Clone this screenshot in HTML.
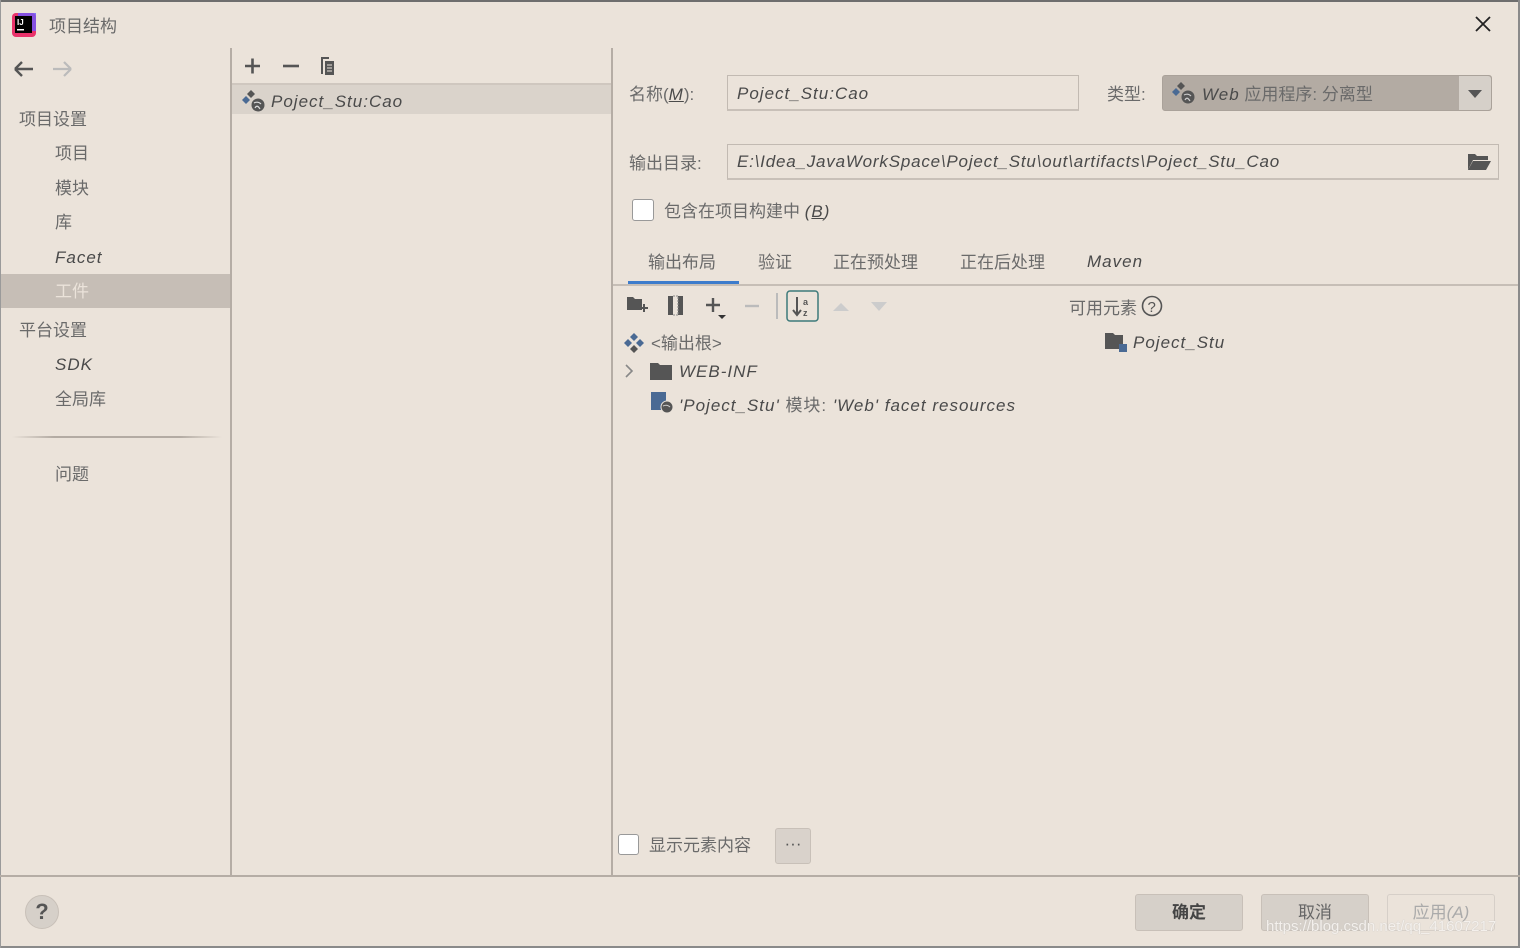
<!DOCTYPE html>
<html><head><meta charset="utf-8"><style>
*{margin:0;padding:0;box-sizing:border-box}
body{width:1520px;height:948px;background:#ebe3da;position:relative;overflow:hidden;font-family:"Liberation Sans","Noto Sans CJK SC",sans-serif;color:#5a5a5a;font-size:17px}
.a{position:absolute;white-space:nowrap}
.i{font-style:italic;color:#4a4a4a;letter-spacing:1px}
.cn{color:#6a6a6a}
</style></head><body>
<div class="a" style="left:0;top:0;width:1520px;height:2px;background:#6e6e6e"></div>
<div class="a" style="right:0;top:0;width:2px;height:948px;background:#8a8a8a"></div>
<div class="a" style="left:0;top:946px;width:1520px;height:2px;background:#8a8a8a"></div>
<div class="a" style="left:0;top:0;width:1px;height:948px;background:#9a9a9a"></div>
<svg class="a" style="left:12px;top:13px" width="24" height="24"><rect x="0" y="0" width="24" height="24" rx="4" fill="#e8336b"/><rect x="6" y="0" width="18" height="18" fill="#6b57ff" opacity=".8"/><rect x="3" y="3" width="17" height="17" fill="#000"/><text x="5" y="12" font-size="8" fill="#fff" font-family="Liberation Sans" font-weight="bold">IJ</text><rect x="5" y="16" width="7" height="1.5" fill="#fff"/></svg>
<div class="a cn" style="left:49px;top:12px">项目结构</div>
<svg class="a" style="left:1474px;top:15px" width="18" height="18"><path d="M2 2L16 16M16 2L2 16" stroke="#222" stroke-width="1.8"/></svg>
<svg class="a" style="left:13px;top:60px" width="60" height="18"><path d="M2 9H20M2 9L9 2M2 9L9 16" stroke="#555" stroke-width="2.4" fill="none"/><path d="M42 9H60M60 9L53 2M60 9L53 16" stroke="#bbb" stroke-width="2.2" fill="none" transform="translate(-2 0)"/></svg>
<div class="a cn" style="left:19px;top:105px">项目设置</div>
<div class="a cn" style="left:55px;top:139px">项目</div>
<div class="a cn" style="left:55px;top:174px">模块</div>
<div class="a cn" style="left:55px;top:208px">库</div>
<div class="a i" style="left:55px;top:248px">Facet</div>
<div class="a" style="left:1px;top:274px;width:229px;height:34px;background:#c6beb6"></div>
<div class="a" style="left:55px;top:277px;color:#ebe3da">工件</div>
<div class="a cn" style="left:19px;top:316px">平台设置</div>
<div class="a i" style="left:55px;top:355px">SDK</div>
<div class="a cn" style="left:55px;top:385px">全局库</div>
<div class="a" style="left:12px;top:436px;width:210px;height:2px;background:linear-gradient(90deg,#ebe3da,#b3aba3 20%,#b3aba3 80%,#ebe3da)"></div>
<div class="a cn" style="left:55px;top:460px">问题</div>
<div class="a" style="left:230px;top:48px;width:2px;height:828px;background:#b5ada5"></div>
<svg class="a" style="left:240px;top:54px" width="105" height="24"><path d="M5 12H20M12.5 4.5V19.5" stroke="#555" stroke-width="2.6"/><path d="M43 12H59" stroke="#555" stroke-width="2.6"/><path d="M81 3H89V5H83V20H81Z" fill="#555"/><rect x="85" y="7" width="9" height="14" fill="#555"/><path d="M87 11H92M87 14H92M87 17H92" stroke="#ebe3da" stroke-width="1"/></svg>
<div class="a" style="left:232px;top:83px;width:380px;height:2px;background:#cfc7bf"></div>
<div class="a" style="left:232px;top:85px;width:380px;height:29px;background:#dad3cb"></div>
<svg class="a" style="left:242px;top:90px" width="24" height="24"><path d="M9 0L13 4L9 8L5 4Z" fill="#555"/><path d="M4 6L8 10L4 14L0 10Z" fill="#4a6a94"/><circle cx="16" cy="15" r="6.5" fill="#555"/><path d="M12 13Q16 11 19 14M13 18Q15 14 18 19" stroke="#ddd" stroke-width="1.2" fill="none"/></svg>
<div class="a i" style="left:271px;top:92px">Poject_Stu:Cao</div>
<div class="a" style="left:611px;top:48px;width:2px;height:828px;background:#b5ada5"></div>
<div class="a cn" style="left:629px;top:80px">名称(<span class="i"><u>M</u></span>):</div>
<div class="a" style="left:727px;top:75px;width:352px;height:36px;background:#ebe3da;border:1px solid #c2bab2;border-bottom:2px solid #c8c0b8"></div>
<div class="a i" style="left:737px;top:84px">Poject_Stu:Cao</div>
<div class="a cn" style="left:1107px;top:80px">类型:</div>
<div class="a" style="left:1162px;top:75px;width:330px;height:36px;background:#b3aba3;border-radius:3px;border:1px solid #aaa29a"></div>
<div class="a" style="left:1459px;top:76px;width:32px;height:34px;background:#d6d0c9;border-radius:0 3px 3px 0"></div>
<svg class="a" style="left:1467px;top:89px" width="16" height="10"><path d="M1 1H15L8 9Z" fill="#555"/></svg>
<svg class="a" style="left:1172px;top:82px" width="24" height="24"><path d="M9 0L13 4L9 8L5 4Z" fill="#555"/><path d="M4 6L8 10L4 14L0 10Z" fill="#4a6a94"/><circle cx="16" cy="15" r="6.5" fill="#555"/><path d="M12 13Q16 11 19 14M13 18Q15 14 18 19" stroke="#ccc" stroke-width="1.2" fill="none"/></svg>
<div class="a" style="left:1202px;top:80px"><span class="i">Web</span> <span class="cn">应用程序: 分离型</span></div>
<div class="a cn" style="left:629px;top:149px">输出目录:</div>
<div class="a" style="left:727px;top:144px;width:772px;height:36px;background:#ebe3da;border:1px solid #c2bab2;border-bottom:2px solid #c8c0b8"></div>
<div class="a i" style="left:737px;top:152px;letter-spacing:.8px">E:\Idea_JavaWorkSpace\Poject_Stu\out\artifacts\Poject_Stu_Cao</div>
<svg class="a" style="left:1467px;top:152px" width="24" height="20"><path d="M1 2H8L10 4H21V8H6L1 18Z" fill="#555"/><path d="M6 9H24L19 18H1Z" fill="#555"/></svg>
<div class="a" style="left:632px;top:199px;width:22px;height:22px;background:#fff;border:1px solid #999;border-radius:3px"></div>
<div class="a cn" style="left:664px;top:197px">包含在项目构建中 <span class="i">(<u>B</u>)</span></div>
<div class="a cn" style="left:648px;top:248px">输出布局</div>
<div class="a cn" style="left:758px;top:248px">验证</div>
<div class="a cn" style="left:833px;top:248px">正在预处理</div>
<div class="a cn" style="left:960px;top:248px">正在后处理</div>
<div class="a i" style="left:1087px;top:252px">Maven</div>
<div class="a" style="left:628px;top:281px;width:111px;height:4px;background:#3d7ccc"></div>
<div class="a" style="left:613px;top:284px;width:905px;height:2px;background:#c6beb6"></div>
<svg class="a" style="left:625px;top:290px" width="270" height="32"><path d="M2 7H8L10 9H17V20H2Z" fill="#555"/><path d="M15 18H23M19 14V22" stroke="#555" stroke-width="2"/><rect x="43" y="6" width="5" height="19" fill="#555"/><rect x="53" y="6" width="5" height="19" fill="#555"/><path d="M48 6H53V25H48" fill="none" stroke="#888" stroke-dasharray="2 1"/><path d="M81 15H95M88 8V22" stroke="#555" stroke-width="2.4"/><path d="M93 25H101L97 29Z" fill="#333"/><path d="M120 16H134" stroke="#bbb" stroke-width="2.4"/><rect x="151" y="3" width="2" height="26" fill="#bbb"/><rect x="162" y="1" width="31" height="30" rx="3" fill="none" stroke="#3d7a7a" stroke-width="1.5"/><path d="M172 7V24M168 20L172 25L176 20" stroke="#555" stroke-width="2" fill="none"/><text x="178" y="15" font-size="9" fill="#555" font-family="Liberation Sans" font-weight="bold">a</text><text x="178" y="26" font-size="9" fill="#555" font-family="Liberation Sans" font-weight="bold">z</text><path d="M208 21L216 13L224 21Z" fill="#ccc"/><path d="M246 12L262 12L254 21Z" fill="#ccc"/></svg>
<div class="a cn" style="left:1069px;top:294px">可用元素</div>
<svg class="a" style="left:1141px;top:295px" width="22" height="22"><circle cx="11" cy="11" r="9.5" fill="none" stroke="#555" stroke-width="1.6"/><text x="6.5" y="17" font-size="15" fill="#555" font-family="Liberation Sans">?</text></svg>
<svg class="a" style="left:623px;top:332px" width="22" height="22"><path d="M11 1L15 5L11 9L7 5Z" fill="#4a6a94"/><path d="M5 7L9 11L5 15L1 11Z" fill="#4a6a94"/><path d="M17 7L21 11L17 15L13 11Z" fill="#4a6a94"/><path d="M11 13L15 17L11 21L7 17Z" fill="#555"/></svg>
<div class="a cn" style="left:651px;top:329px">&lt;输出根&gt;</div>
<svg class="a" style="left:623px;top:363px" width="12" height="16"><path d="M3 2L9 8L3 14" stroke="#888" stroke-width="1.6" fill="none"/></svg>
<svg class="a" style="left:650px;top:362px" width="22" height="20"><path d="M0 1H8L10 3H22V18H0Z" fill="#555"/></svg>
<div class="a i" style="left:679px;top:362px">WEB-INF</div>
<svg class="a" style="left:651px;top:392px" width="24" height="24"><rect x="0" y="0" width="15" height="18" fill="#4a6a94"/><circle cx="16" cy="15" r="6" fill="#555" stroke="#ebe3da" stroke-width="1"/><path d="M12 14Q16 12 19 15" stroke="#ccc" stroke-width="1" fill="none"/></svg>
<div class="a i" style="left:679px;top:391px">'Poject_Stu' <span class="cn" style="font-style:normal">模块:</span> 'Web' facet resources</div>
<svg class="a" style="left:1105px;top:332px" width="24" height="22"><path d="M0 1H8L10 3H18V17H0Z" fill="#555"/><rect x="14" y="12" width="8" height="8" fill="#4a6a94"/></svg>
<div class="a i" style="left:1133px;top:333px">Poject_Stu</div>
<div class="a" style="left:618px;top:834px;width:21px;height:21px;background:#fff;border:1px solid #999;border-radius:3px"></div>
<div class="a cn" style="left:649px;top:831px">显示元素内容</div>
<div class="a" style="left:775px;top:828px;width:36px;height:36px;background:#d9d2cb;border:1px solid #c8c0b8;border-radius:3px;text-align:center;line-height:30px;color:#555">···</div>
<div class="a" style="left:0;top:875px;width:1520px;height:2px;background:#b5ada5"></div>
<div class="a" style="left:25px;top:895px;width:34px;height:34px;border-radius:50%;background:#d6d0c9;border:1px solid #c8c0b8;text-align:center;line-height:32px;font-size:22px;color:#555;font-weight:bold">?</div>
<div class="a" style="left:1135px;top:894px;width:108px;height:37px;background:#d6d0c9;border:1px solid #c8c0b8;border-radius:3px;text-align:center;line-height:35px;color:#444;font-weight:bold">确定</div>
<div class="a" style="left:1261px;top:894px;width:108px;height:37px;background:#d6d0c9;border:1px solid #c8c0b8;border-radius:3px;text-align:center;line-height:35px;color:#666">取消</div>
<div class="a" style="left:1387px;top:894px;width:108px;height:37px;background:#ebe3da;border:1px solid #d6cfc8;border-radius:3px;text-align:center;line-height:35px;color:#aaa">应用<span style="font-style:italic">(A)</span></div>
<div class="a" style="left:1266px;top:918px;font-size:15px;color:#f4f0ec;text-shadow:0 0 1px #bbb">https://blog.csdn.net/qq_41607217</div>
</body></html>
